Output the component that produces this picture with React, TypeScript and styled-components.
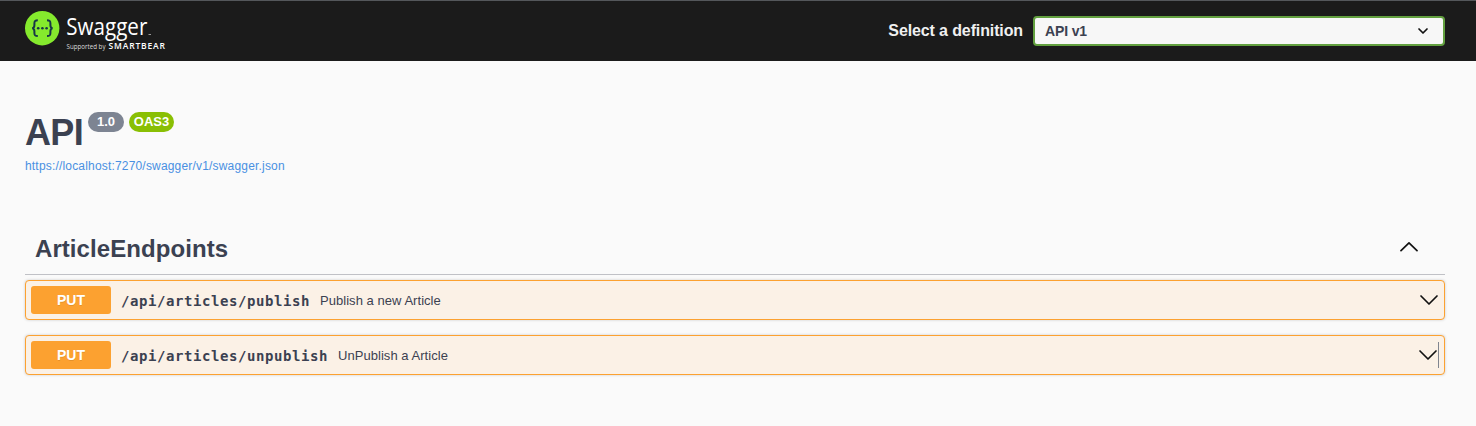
import React from "react";
import styled, { createGlobalStyle } from "styled-components";

const sans = `"Liberation Sans", Arial, sans-serif`;
const ink = "#3b4151";

const GlobalStyle = createGlobalStyle`
  *, *::before, *::after { box-sizing: border-box; }
  body { margin: 0; min-height: 100vh; background: #fafafa; color: ${ink}; font-family: ${sans}; }
`;

const Topbar = styled.header`
  display: flex;
  align-items: flex-start;
  justify-content: space-between;
  height: 61px;
  padding: 0 31px 0 25px;
  background: #1b1b1b;
  border-top: 1px solid #54575b;
`;

const Logo = styled.svg`
  display: block;
  margin-top: 9px;
`;

const Definition = styled.label`
  display: flex;
  align-items: center;
  gap: 10px;
  margin-top: 15px;
  color: #f0f0f0;
  font-size: 16px;
  font-weight: 700;
`;

const DefinitionText = styled.span`
  line-height: 30px;
  letter-spacing: -0.12px;
`;

const SelectBox = styled.div`
  display: flex;
  align-items: center;
  justify-content: space-between;
  width: 412px;
  height: 30px;
  padding: 0 14px 0 10px;
  border: 2px solid #62a03f;
  border-radius: 4px;
  background: #f7f7f7;
  color: ${ink};
  font-size: 14px;
  letter-spacing: -0.15px;
`;

const Main = styled.main`
  padding: 51px 31px 0 25px;
`;

const TitleRow = styled.div`
  display: flex;
  align-items: flex-start;
  height: 46px;
`;

const Title = styled.h2`
  margin: 0 5px 0 0;
  font-size: 36px;
  line-height: 42px;
  letter-spacing: -0.67px;
`;

const Badge = styled.span<{ $color: string; $width: number }>`
  width: ${(p) => p.$width}px;
  height: 20px;
  margin-right: 5px;
  border-radius: 10px;
  background: ${(p) => p.$color};
  color: #fff;
  font-size: 13px;
  font-weight: 700;
  line-height: 20px;
  text-align: center;
`;

const SpecLink = styled.a`
  display: block;
  width: max-content;
  color: #4990e2;
  font-size: 12px;
  line-height: 16px;
  letter-spacing: 0.18px;
`;

const TagHeader = styled.div`
  display: flex;
  align-items: center;
  justify-content: space-between;
  height: 51px;
  margin: 50px 0 5px;
  padding: 0 26px 0 10px;
  border-bottom: 1px solid #c0c1c6;
`;

const TagName = styled.h3`
  margin: 0;
  font-size: 24px;
  line-height: 50px;
  letter-spacing: 0.07px;
`;

const Operation = styled.div`
  display: flex;
  align-items: center;
  height: 40px;
  margin-bottom: 15px;
  padding: 0 5px;
  border: 1px solid #fca130;
  border-radius: 4px;
  background: #fbf1e6;
  box-shadow: 0 0 3px rgba(0, 0, 0, 0.19);
`;

const Method = styled.span`
  width: 80px;
  height: 28px;
  border-radius: 3px;
  background: #fca130;
  color: #fff;
  font-size: 14px;
  font-weight: 700;
  line-height: 28px;
  text-align: center;
  text-shadow: 0 1px 0 rgba(0, 0, 0, 0.1);
`;

const Path = styled.span`
  margin: 1px 10px 0;
  font-family: "DejaVu Sans Mono", monospace;
  font-size: 14px;
  line-height: 18px;
  letter-spacing: 0.572px;
  font-weight: 700;
`;

const Summary = styled.span`
  flex: 1;
  font-size: 13px;
  letter-spacing: 0.04px;
`;

const Caret = styled.span`
  width: 1px;
  height: 26px;
  background: #80858f;
`;

const Chevron = ({ up = false }: { up?: boolean }) => (
  <svg width="20" height="14" viewBox="0 0 20 14" fill="none" stroke="#111" strokeWidth="1.7" strokeLinecap="round" strokeLinejoin="round">
    <path d={up ? "M2 8.7 10 .9l8 7.8" : "M2 3 10 11l8-8"} />
  </svg>
);

const operations = [
  { path: "/api/articles/publish", summary: "Publish a new Article", caret: false },
  { path: "/api/articles/unpublish", summary: "UnPublish a Article", caret: true },
];

export default function App() {
  return (
    <>
      <GlobalStyle />
      <Topbar>
        <Logo width="150" height="46" viewBox="0 0 150 46">
          <circle cx="17.2" cy="18.2" r="17.2" fill="#85ea2d" />
          <g fill="none" stroke="#173647" strokeWidth="2">
            <path d="M12.8 10.3c-3 0-3.400.8-3.400 3v1.900c0 2-.5 2.800-2.200 3 1.700.2 2.200 1 2.200 3v1.900c0 2.200.4 3 3.400 3" />
            <path d="M22 10.300c3 0 3.400.8 3.400 3v1.900c0 2 .5 2.800 2.200 3-1.700.2-2.200 1-2.200 3v1.900c0 2.200-.4 3-3.400 3" />
          </g>
          <g fill="#173647">
            <circle cx="13.200" cy="18.200" r="1.300" />
            <circle cx="17.400" cy="18.200" r="1.300" />
            <circle cx="21.600" cy="18.200" r="1.300" />
          </g>
          <text x="41.300" y="25.200" fill="#fff" fontFamily="Open Sans, sans-serif" fontSize="22.800" textLength="81" lengthAdjust="spacingAndGlyphs">Swagger</text>
          <path d="M123.500 24.500h2.500" stroke="#999" strokeWidth="1" />
          <text x="41.500" y="39.200" fill="#ddd" fontFamily="Open Sans, sans-serif" fontSize="7" textLength="39" lengthAdjust="spacingAndGlyphs">Supported by</text>
          <text x="83.500" y="39.200" fill="#fff" fontFamily="Open Sans, sans-serif" fontSize="8.500" fontWeight="600" textLength="56.500">SMARTBEAR</text>
        </Logo>
        <Definition>
          <DefinitionText>Select a definition</DefinitionText>
          <SelectBox>
            <span>API v1</span>
            <svg width="12" height="8" viewBox="0 0 12 8" fill="none" stroke="#111" strokeWidth="1.700" strokeLinecap="round" strokeLinejoin="round">
              <path d="M2 2l4 4 4-4" />
            </svg>
          </SelectBox>
        </Definition>
      </Topbar>
      <Main>
        <TitleRow>
          <Title>API</Title>
          <Badge $color="#7d8492" $width={36}>1.0</Badge>
          <Badge $color="#89bf04" $width={45}>OAS3</Badge>
        </TitleRow>
        <SpecLink>https://localhost:7270/swagger/v1/swagger.json</SpecLink>
        <TagHeader>
          <TagName>ArticleEndpoints</TagName>
          <Chevron up />
        </TagHeader>
        {operations.map((op) => (
          <Operation key={op.path}>
            <Method>PUT</Method>
            <Path>{op.path}</Path>
            <Summary>{op.summary}</Summary>
            <Chevron />
            {op.caret && <Caret />}
          </Operation>
        ))}
      </Main>
    </>
  );
}
